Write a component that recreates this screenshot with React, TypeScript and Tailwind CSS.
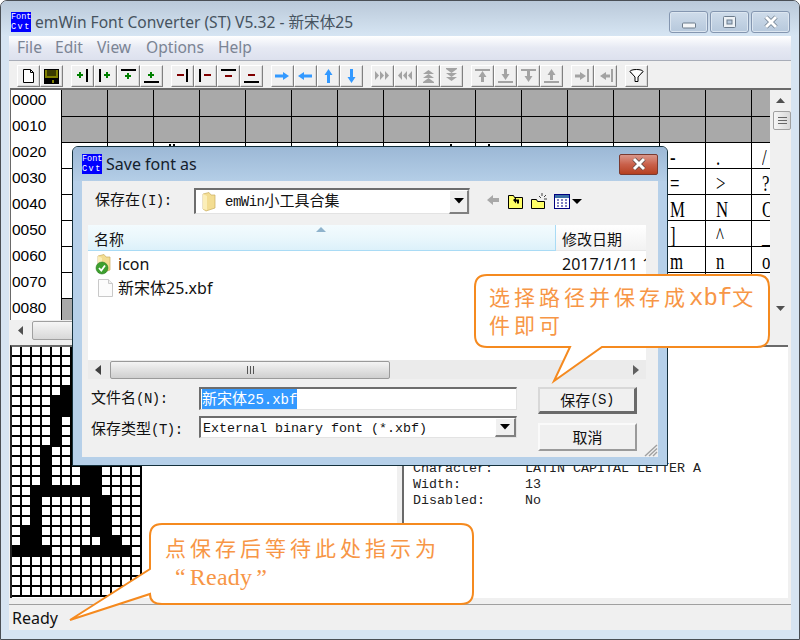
import type { ReactNode } from "react";

const SANS = "font-[family-name:'Noto_Sans','Noto_Sans_CJK_SC',sans-serif]";
const MONO = "font-[family-name:'Liberation_Mono','Noto_Sans_CJK_SC',monospace]";
const SERIF = "font-[family-name:'Liberation_Serif','Noto_Sans_CJK_SC',serif]";

// ---- toolbar icon helpers, everything in a 21x20 box ----
const GREEN = "#008000";
const RED = "#800000";
const BLUE = "#3399ff";
const GRAY = "#a3a3a3";

const plus = (cx: number, cy: number, c: string) => (
  <>
    <rect x={cx - 3} y={cy - 1} width="6" height="2" fill={c} />
    <rect x={cx - 1} y={cy - 3} width="2" height="6" fill={c} />
  </>
);
const minus = (cx: number, cy: number, c: string) => <rect x={cx - 3} y={cy - 1} width="7" height="2" fill={c} />;
const barV = (x: number, c = "#000") => <rect x={x} y="3" width="2" height="13" fill={c} />;
const barH = (y: number, c = "#000") => <rect x="3" y={y} width="15" height="2" fill={c} />;

const right = (x0: number, x1: number, cy: number, c: string) => (
  <polygon points={`${x0},${cy - 1.5} ${x1 - 6},${cy - 1.5} ${x1 - 6},${cy - 4} ${x1},${cy} ${x1 - 6},${cy + 4} ${x1 - 6},${cy + 1.5} ${x0},${cy + 1.5}`} fill={c} />
);
const left = (x0: number, x1: number, cy: number, c: string) => (
  <polygon points={`${x1},${cy - 1.5} ${x0 + 6},${cy - 1.5} ${x0 + 6},${cy - 4} ${x0},${cy} ${x0 + 6},${cy + 4} ${x0 + 6},${cy + 1.5} ${x1},${cy + 1.5}`} fill={c} />
);
const up = (y0: number, y1: number, cx: number, c: string) => (
  <polygon points={`${cx - 1.5},${y1} ${cx - 1.5},${y0 + 6} ${cx - 4},${y0 + 6} ${cx},${y0} ${cx + 4},${y0 + 6} ${cx + 1.5},${y0 + 6} ${cx + 1.5},${y1}`} fill={c} />
);
const down = (y0: number, y1: number, cx: number, c: string) => (
  <polygon points={`${cx - 1.5},${y0} ${cx - 1.5},${y1 - 6} ${cx - 4},${y1 - 6} ${cx},${y1} ${cx + 4},${y1 - 6} ${cx + 1.5},${y1 - 6} ${cx + 1.5},${y0}`} fill={c} />
);
const triR = (x: number) => <polygon points={`${x},5 ${x + 4},9.5 ${x},14`} fill={GRAY} />;
const triL = (x: number) => <polygon points={`${x + 4},5 ${x},9.5 ${x + 4},14`} fill={GRAY} />;
const triU = (y: number) => <polygon points={`5,${y + 4} 10.5,${y} 16,${y + 4}`} fill={GRAY} />;
const triD = (y: number) => <polygon points={`5,${y} 10.5,${y + 4} 16,${y}`} fill={GRAY} />;

const toolbarGroups: ReactNode[][] = [
  [
    <path d="M5.5 3.5h7l3 3v10h-10z M12.5 3.5v3h3" fill="#fff" stroke="#000" />,
    <>
      <rect x="3" y="3" width="15" height="15" fill="#000" />
      <rect x="4" y="4" width="13" height="8" fill="#808000" />
      <rect x="6" y="4" width="9" height="6" fill="#3a3a00" />
      <rect x="6" y="13" width="9" height="5" fill="#000" />
      <rect x="11" y="14" width="2" height="3" fill="#808000" />
    </>,
  ],
  [
    <>{plus(8, 9, GREEN)}{barV(14)}</>,
    <>{barV(4)}{plus(12, 9, GREEN)}</>,
    <>{barH(3)}{plus(10, 10, GREEN)}</>,
    <>{plus(10, 9, GREEN)}{barH(15)}</>,
  ],
  [
    <>{minus(8, 9, RED)}{barV(14)}</>,
    <>{barV(4)}{minus(12, 9, RED)}</>,
    <>{barH(3)}{minus(10, 10, RED)}</>,
    <>{minus(10, 9, RED)}{barH(15)}</>,
  ],
  [
    right(3, 17, 10, BLUE),
    left(3, 17, 10, BLUE),
    up(3, 17, 10.5, BLUE),
    down(3, 17, 10.5, BLUE),
  ],
  [
    <>{triR(3)}{triR(8)}{triR(13)}</>,
    <>{triL(3)}{triL(8)}{triL(13)}</>,
    <>{triU(4)}{triU(8)}{triU(12)}<rect x="5" y="16" width="11" height="1" fill={GRAY} /></>,
    <>{triD(3)}{triD(7)}{triD(11)}<rect x="5" y="2" width="11" height="1" fill={GRAY} /></>,
  ],
  [
    <>{barH(3, GRAY)}{up(5, 16, 10.5, GRAY)}</>,
    <>{down(3, 14, 10.5, GRAY)}{barH(15, GRAY)}</>,
    <>{barH(3, GRAY)}{down(5, 16, 10.5, GRAY)}</>,
    <>{up(3, 14, 10.5, GRAY)}{barH(15, GRAY)}</>,
  ],
  [
    <>{right(3, 14, 10, GRAY)}{barV(15, GRAY)}</>,
    <>{left(5, 15, 10, GRAY)}{barV(16, GRAY)}</>,
  ],
  [
    <>
      <ellipse cx="10.5" cy="5.5" rx="6.5" ry="2" fill="#fff" stroke="#000" />
      <path d="M4.5 6 L9 11 V15.5 H12 V11 L16.5 6" fill="#fff" stroke="#000" />
    </>,
  ],
];

function ToolButton({ children }: { children: ReactNode }) {
  return (
    <div className="h-[22px] w-[23px] border border-t-white border-l-white border-r-[#808080] border-b-[#808080] bg-[#f0f0f0] shadow-[inset_-1px_-1px_0_#d8d8d8]">
      <svg width="21" height="20" viewBox="0 0 21 20">
        {children}
      </svg>
    </div>
  );
}

function FontCvtIcon() {
  return (
    <div className={`flex h-[20px] w-[20px] shrink-0 flex-col overflow-hidden bg-[#0000ff] text-[8.5px] leading-[10px] text-white ${MONO}`}>
      <span>Font</span>
      <span className="tracking-[1.5px]">Cvt</span>
    </div>
  );
}

function CaptionButton({ children }: { children: ReactNode }) {
  return (
    <div className="flex h-[22px] w-[39px] items-center justify-center rounded-[3px] border border-[#8496b0] bg-gradient-to-b from-[#cfdcea] to-[#b6c8dc] shadow-[inset_0_0_0_1px_#dce6f0]">
      {children}
    </div>
  );
}

function FolderIcon({ check }: { check?: boolean }) {
  return (
    <svg width="18" height="22" viewBox="0 0 18 22">
      <path d="M3 3 L9 1.5 L11 4 L15 4 L15 17 L6 20 L3 18 Z" fill="#f3dd92" stroke="#c9ae60" strokeWidth="0.7" />
      <path d="M3 3 L7 5 L7 19 L3 18 Z" fill="#fbeeb8" />
      {check && (
        <>
          <circle cx="7" cy="15" r="6" fill="#3da02e" stroke="#2a7a1e" strokeWidth="0.6" />
          <path d="M4 15 L6.3 17.5 L10 12.5" fill="none" stroke="#fff" strokeWidth="1.8" />
        </>
      )}
    </svg>
  );
}

function Latin({ children }: { children: ReactNode }) {
  return <span className={`text-[14px] tracking-[-0.5px] ${MONO}`}>{children}</span>;
}

const PIXELS = [
  ".............",
  ".............",
  ".............",
  ".............",
  ".....##......",
  "....###......",
  "....###......",
  "....#.##.....",
  "....#.##.....",
  "....#..##....",
  "...#...##....",
  "...#...##....",
  "...#...##....",
  "...#...##....",
  "..#######....",
  "..#.....##...",
  "..#.....##...",
  "..#.....##...",
  ".##.....##...",
  ".##......##..",
  "####...#####.",
  ".............",
  ".............",
  ".............",
  ".............",
];

const rowCodes = ["0000", "0010", "0020", "0030", "0040", "0050", "0060", "0070", "0080"];

// only the part of the table that the dialog leaves uncovered gets glyphs
const glyphRows = [
  "-./",
  "=>?",
  "MNO",
  "]^_",
  "mno",
];

// tips of the row 0020 glyphs that stick out above the dialog, px from the cell's left
const peekMarks: Record<number, number[]> = { 2: [15, 19], 8: [20], 9: [12] };

function CharGrid() {
  return (
    <div className="h-[230px] flex-1 overflow-hidden">
      {rowCodes.map((code, r) => {
        const gray = r < 2 || r === 8;
        return (
          <div key={code} className={`flex ${r === 0 ? "h-[27px]" : "h-[26px]"} border-b border-black ${gray ? "bg-[#a9a9a9]" : "bg-white"}`}>
            {Array.from({ length: 16 }, (_, c) => {
              const ch = !gray && c >= 13 ? glyphRows[r - 2]?.[c - 13] ?? "" : "";
              const marks = r === 2 ? peekMarks[c] : undefined;
              return (
                <div key={c} className="relative w-[46px] shrink-0 overflow-hidden border-l border-black">
                  {ch && (
                    <span className={`absolute top-[1px] left-[10px] origin-left scale-x-[0.7] text-[24px] leading-[26px] text-black ${SERIF}`}>{ch}</span>
                  )}
                  {marks?.map((m) => (
                    <span key={m} className="absolute top-[1px] h-[2px] w-[2px] bg-black" style={{ left: m }} />
                  ))}
                </div>
              );
            })}
          </div>
        );
      })}
    </div>
  );
}

function Callout({ className, width, height, path, children }: { className: string; width: number; height: number; path: string; children: ReactNode }) {
  return (
    <div className={`absolute ${className}`} style={{ width, height }}>
      <svg className="absolute inset-0" width={width} height={height} viewBox={`0 0 ${width} ${height}`}>
        <path d={path} fill="#fff" stroke="#f58a1f" strokeWidth="2" />
      </svg>
      <div className={`relative text-[21px] tracking-[3.7px] text-[#f79646] ${SANS}`}>{children}</div>
    </div>
  );
}

function SaveDialog() {
  return (
    <div className="absolute top-[146px] left-[72px] flex h-[320px] w-[596px] flex-col rounded-t-[6px] border border-[#14303c] bg-[#b6d0e9] text-[15px] text-[#111]">
      <div className="flex h-[34px] shrink-0 items-center justify-between rounded-t-[5px] bg-gradient-to-b from-[#9cb8d6] to-[#b4cee7] pr-[9px] pl-[9px]">
        <div className="flex items-center gap-[4px]">
          <FontCvtIcon />
          <span className={`text-[16px] text-[#14202c] ${SANS}`}>Save font as</span>
        </div>
        <div className="flex h-[21px] w-[39px] items-center justify-center rounded-[2px] border border-[#7a3a30] bg-gradient-to-b from-[#d9968a] via-[#c9604a] to-[#b5401f]">
          <svg width="16" height="14" viewBox="0 0 16 14">
            <path d="M3 2 L13 12 M13 2 L3 12" stroke="#5a4a48" strokeWidth="4.5" />
            <path d="M3 2 L13 12 M13 2 L3 12" stroke="#fff" strokeWidth="3" />
          </svg>
        </div>
      </div>

      <div className={`relative mx-[9px] h-[276px] bg-[#f0f0f0] ${SANS}`}>
        <div className="flex h-[44px] items-start pt-[7px]">
          <div className="w-[112px] pl-[13px]">
            保存在<Latin>(I):</Latin>
          </div>
          <div className="flex h-[26px] w-[276px] items-center border-t-2 border-l-2 border-r border-b border-t-[#6d6d6d] border-l-[#6d6d6d] border-r-[#e3e3e3] border-b-[#e3e3e3] bg-white pl-[4px]">
            <FolderIcon />
            <span className="mb-[2px] ml-[7px] flex-1">
              <Latin>emWin</Latin>小工具合集
            </span>
            <div className="flex h-[24px] w-[20px] items-center justify-center border-r-2 border-b-2 border-t border-l border-t-white border-l-white border-r-[#808080] border-b-[#808080] bg-[#f0f0f0]">
              <svg width="10" height="6" viewBox="0 0 10 6">
                <polygon points="0,0 10,0 5,5.5" fill="#000" />
              </svg>
            </div>
          </div>
          <svg className="mt-[3px] ml-[14px]" width="100" height="20" viewBox="0 0 100 20">
            <polygon points="3,9 9,4 9,7 15,7 15,11 9,11 9,14" fill="#a8a8a8" />
            <path d="M24.5 4.5h5l1 2h8v11h-14z" fill="#ffff66" stroke="#000" />
            <path d="M29 9l3-2.5v2h3v4h-2v-2h-1v2l-3-3.5z" fill="#000" />
            <path d="M47.5 8.5h5l1 2h7v7h-13z" fill="#ffff66" stroke="#000" />
            <path d="M55 5l2 2 M58 2v3 M60 6l2-2 M60 8h3" stroke="#404040" />
            <rect x="70.5" y="3.5" width="15" height="14" fill="#fff" stroke="#000080" />
            <rect x="71" y="4" width="14" height="3" fill="#3a6ea5" />
            <path d="M73 9h2M77 9h2M81 9h2M73 12h2M77 12h2M81 12h2M73 15h2M77 15h2M81 15h2" stroke="#000080" />
            <polygon points="88,8 98,8 93,13" fill="#000" />
          </svg>
        </div>

        <div className="mx-[6px] h-[154px] w-[558px] bg-white">
          <div className="relative flex h-[26px]">
            <div className="flex w-[468px] items-center border-r border-b border-[#a9dbf5] bg-gradient-to-b from-[#f3fbfe] via-[#eaf7fc] to-[#dcf1fa] pt-[3px] pl-[6px]">
              名称
              <svg className="absolute top-[1px] left-[227px]" width="12" height="7" viewBox="0 0 12 7">
                <polygon points="1,6 6,1 11,6" fill="#8fb3cc" />
              </svg>
            </div>
            <div className="flex flex-1 items-center border-b border-[#e8e8e8] bg-gradient-to-b from-white to-[#f2f2f2] pt-[3px] pl-[6px]">修改日期</div>
          </div>
          <div className="flex h-[109px]">
            <div className="w-[468px] pt-[1px] text-[16px] leading-[23px]">
              <div className="flex h-[24px] items-center">
                <div className="ml-[7px] w-[23px]">
                  <FolderIcon check />
                </div>
                <span>icon</span>
              </div>
              <div className="flex h-[24px] items-center">
                <svg className="ml-[9px] w-[21px]" width="17" height="20" viewBox="0 0 21 20">
                  <path d="M1.5 1.5h10l4 4v13h-14z" fill="#fcfcfc" stroke="#c9c9c9" />
                  <path d="M11.5 1.5v4h4" fill="#f0f0f0" stroke="#c9c9c9" />
                </svg>
                <span>新宋体25.xbf</span>
              </div>
            </div>
            <div className="flex-1 overflow-hidden pt-[1px] pl-[6px] text-[16px] leading-[24px] whitespace-nowrap">2017/1/11 1</div>
          </div>
          <div className="flex h-[19px] items-center bg-[#ebebeb]">
            <svg className="ml-[7px]" width="6" height="10" viewBox="0 0 6 10">
              <polygon points="6,0 0,5 6,10" fill="#404040" />
            </svg>
            <div className="relative ml-[9px] flex h-[18px] w-[280px] items-center justify-center rounded-[2px] border border-[#9a9a9a] bg-gradient-to-b from-[#f4f4f4] to-[#cfcfcf]">
              <div className="flex gap-[2px]">
                <span className="h-[8px] w-px bg-[#555]" />
                <span className="h-[8px] w-px bg-[#555]" />
                <span className="h-[8px] w-px bg-[#555]" />
              </div>
            </div>
            <svg className="ml-auto mr-[7px]" width="6" height="10" viewBox="0 0 6 10">
              <polygon points="0,0 6,5 0,10" fill="#606060" />
            </svg>
          </div>
        </div>

        <div className="mt-[8px] flex pl-[9px]">
          <div className="w-[426px]">
            <div className="flex h-[23px] items-center">
              <div className="mb-[2px] w-[108px]">
                文件名<Latin>(N):</Latin>
              </div>
              <div className="flex h-[23px] w-[318px] items-center border-t-2 border-l-2 border-r border-b border-t-[#6d6d6d] border-l-[#6d6d6d] border-r-[#e3e3e3] border-b-[#e3e3e3] bg-white pl-px">
                <span className="bg-[#3399ff] leading-[18px] text-white">
                  新宋体<span className={`text-[14px] ${MONO}`}>25.xbf</span>
                </span>
              </div>
            </div>
            <div className="mt-[6px] flex h-[22px] items-center">
              <div className="mt-[3px] w-[108px]">
                保存类型<Latin>(T):</Latin>
              </div>
              <div className="flex h-[22px] w-[318px] items-center border-t-2 border-l-2 border-r border-b border-t-[#6d6d6d] border-l-[#6d6d6d] border-r-[#e3e3e3] border-b-[#e3e3e3] bg-white pl-[2px]">
                <span className={`flex-1 pt-[3px] text-[13.33px] leading-[16px] ${MONO}`}>External binary font (*.xbf)</span>
                <div className="flex h-[19px] w-[21px] items-center justify-center border-r-2 border-b-2 border-t border-l border-t-white border-l-white border-r-[#808080] border-b-[#808080] bg-[#f0f0f0]">
                  <svg width="10" height="6" viewBox="0 0 10 6">
                    <polygon points="0,0 10,0 5,5.5" fill="#000" />
                  </svg>
                </div>
              </div>
            </div>
          </div>
          <div className="ml-[21px] w-[99px]">
            <div className="flex h-[27px] items-center justify-center border-t-2 border-l-2 border-r-[3px] border-b-[3px] border-t-[#d8d8d8] border-l-[#d8d8d8] border-r-[#6a6a6a] border-b-[#6a6a6a] bg-[#f0f0f0]">
              保存<Latin>(S)</Latin>
            </div>
            <div className="mt-[9px] flex h-[28px] items-center justify-center border-t-2 border-l-2 border-r-2 border-b-2 border-t-[#fafafa] border-l-[#fafafa] border-r-[#9a9a9a] border-b-[#9a9a9a] bg-[#f0f0f0]">取消</div>
          </div>
        </div>
        <svg className="absolute right-0 bottom-0" width="14" height="13" viewBox="0 0 14 13">
          <path d="M1 12 L13 1 M5 12 L13 4.5 M9 12 L13 8" stroke="#a0a0a0" strokeWidth="1.4" />
        </svg>
      </div>
    </div>
  );
}

export default function App() {
  return (
    <div className={`relative h-[640px] w-[800px] overflow-hidden bg-white text-black ${SANS}`}>
      {/* Main window */}
      <div className="flex h-full flex-col rounded-t-[7px] border border-[#4a4f55] bg-[#d6e4f2]">
        <div className="flex h-[35px] shrink-0 items-start justify-between rounded-t-[6px] bg-gradient-to-b from-[#bac9d9] to-[#d6e5f3] pt-[10px] pr-[9px] pl-[10px]">
          <div className="flex items-center gap-[4px]">
            <FontCvtIcon />
            <span className="text-[15.6px] leading-[22px] whitespace-nowrap text-[#46535f]">emWin Font Converter (ST) V5.32 - 新宋体25</span>
          </div>
          <div className="flex gap-[2px]">
            <CaptionButton>
              <svg className="mt-[6px]" width="14" height="7" viewBox="0 0 14 7">
                <rect x="0.5" y="1" width="13" height="5" rx="1" fill="#f4f6f8" stroke="#6d7c8c" />
              </svg>
            </CaptionButton>
            <CaptionButton>
              <svg width="13" height="12" viewBox="0 0 13 12">
                <rect x="0.5" y="0.5" width="12" height="11" rx="1" fill="#eef2f6" stroke="#6d7c8c" />
                <rect x="4" y="4" width="5" height="4" fill="#b6c8dc" stroke="#6d7c8c" />
              </svg>
            </CaptionButton>
            <CaptionButton>
              <svg width="16" height="14" viewBox="0 0 16 14">
                <path d="M3 2 L13 12 M13 2 L3 12" stroke="#6d7c8c" strokeWidth="4.5" />
                <path d="M3 2 L13 12 M13 2 L3 12" stroke="#fff" strokeWidth="3" />
              </svg>
            </CaptionButton>
          </div>
        </div>

        <div className="mx-[8px] flex h-[594px] flex-col bg-[#f0f0f0]">
          {/* Menu */}
          <div className="flex h-[25px] shrink-0 items-center border-b border-[#a8adb8] bg-gradient-to-b from-white via-[#e6e9f3] to-[#dde1ee] pl-[8px] text-[15.6px] text-[#7b8494]">
            <span className="w-[38px]">File</span>
            <span className="w-[42px]">Edit</span>
            <span className="w-[49px]">View</span>
            <span className="w-[72px]">Options</span>
            <span>Help</span>
          </div>
          {/* Toolbar */}
          <div className="flex h-[27px] shrink-0 gap-[8px] pt-[4px] pl-[8px]">
            {toolbarGroups.map((group, g) => (
              <div key={g} className="flex">
                {group.map((icon, i) => (
                  <ToolButton key={i}>{icon}</ToolButton>
                ))}
              </div>
            ))}
          </div>

          {/* Character table */}
          <div className="ml-px flex h-[232px] shrink-0 border-t-2 border-l border-[#6a6a6a]">
            <div className="w-[50px] shrink-0 overflow-hidden bg-white">
              {rowCodes.map((code) => (
                <div key={code} className="h-[26px] pl-[1px] font-[family-name:'Liberation_Sans'] text-[15.5px] leading-[20px] text-black">
                  {code}
                </div>
              ))}
            </div>
            <CharGrid />
            <div className="relative flex w-[21px] shrink-0 flex-col items-center bg-[#f0f0f0]">
              <svg className="mt-[8px]" width="9" height="5" viewBox="0 0 9 5">
                <polygon points="0,5 4.5,0 9,5" fill="#505050" />
              </svg>
              <div className="mt-[8px] ml-[3px] flex h-[19px] w-[18px] flex-col items-center justify-center gap-[2px] rounded-[2px] border border-[#a0a0a0] bg-gradient-to-r from-[#f6f6f6] to-[#d8d8d8]">
                <span className="h-px w-[9px] bg-[#666]" />
                <span className="h-px w-[9px] bg-[#666]" />
                <span className="h-px w-[9px] bg-[#666]" />
              </div>
              <svg className="mt-auto mb-[9px]" width="9" height="5" viewBox="0 0 9 5">
                <polygon points="0,0 4.5,5 9,0" fill="#505050" />
              </svg>
            </div>
          </div>

          {/* Horizontal scrollbar */}
          <div className="flex h-[25px] shrink-0 pl-[2px]">
            <div className="flex h-[20px] items-center">
              <svg className="ml-[7px]" width="5" height="9" viewBox="0 0 5 9">
                <polygon points="5,0 0,4.5 5,9" fill="#505050" />
              </svg>
              <div className="ml-[9px] h-[19px] w-[200px] rounded-[2px] border border-[#a0a0a0] bg-gradient-to-b from-[#f6f6f6] to-[#d8d8d8]" />
            </div>
          </div>

          {/* Lower panes */}
          <div className="flex h-[253px] shrink-0">
            <div className="ml-px w-[387px] border-t-2 border-l-2 border-t-[#6a6a6a] border-l-[#222] bg-white">
              <div className="grid grid-cols-[repeat(13,10px)]">
                {PIXELS.flatMap((line, r) =>
                  line.split("").map((p, c) => (
                    <div key={`${r}-${c}`} className={`h-[10px] w-[10px] border-r-2 border-b-2 border-black ${p === "#" ? "bg-black" : "bg-white"}`} />
                  )),
                )}
              </div>
            </div>
            <div className="w-[5px]" />
            <div className={`w-[386px] border-t-2 border-l-2 border-t-[#6a6a6a] border-l-[#6a6a6a] bg-white pt-[114px] pl-[9px] text-[13.33px] leading-[16px] text-[#222] ${MONO}`}>
              <div className="flex">
                <span className="w-[112px]">Character:</span>
                <span>LATIN CAPITAL LETTER A</span>
              </div>
              <div className="flex">
                <span className="w-[112px]">Width:</span>
                <span>13</span>
              </div>
              <div className="flex">
                <span className="w-[112px]">Disabled:</span>
                <span>No</span>
              </div>
            </div>
          </div>

          {/* Status bar */}
          <div className="mt-[6px] flex h-[26px] shrink-0 items-center border-t border-[#a0a0a0] pl-[3px] text-[16px] text-[#111]">Ready</div>
        </div>
      </div>

      <SaveDialog />

      <Callout
        className="top-[270px] left-[470px]"
        width={304}
        height={116}
        path="M17,5 H287 Q299,5 299,17 V65 Q299,77 287,77 H132 L84,111 L100,77 H17 Q5,77 5,65 V17 Q5,5 17,5 Z"
      >
        <div className="pt-[14px] pl-[19px] leading-[27px] tracking-[4px]">
          选择路径并保存成<span className={`text-[24px] tracking-normal ${MONO}`}>xbf</span>文
          <br />
          件即可
        </div>
      </Callout>

      <Callout
        className="top-[519px] left-[65px]"
        width={413}
        height={108}
        path="M97,5 H396 Q408,5 408,17 V73 Q408,85 396,85 H97 Q85,85 85,75 L5,101 L85,50 V17 Q85,5 97,5 Z"
      >
        <div className="pt-[15px] pl-[100px] leading-[29px] tracking-[4px]">
          点保存后等待此处指示为
          <br />
          <span className={`pl-[10px] text-[24px] tracking-[0.2px] ${SERIF}`}>
            “<span className="ml-[4px]">Ready</span>
            <span className="ml-[4px]">”</span>
          </span>
        </div>
      </Callout>
    </div>
  );
}
